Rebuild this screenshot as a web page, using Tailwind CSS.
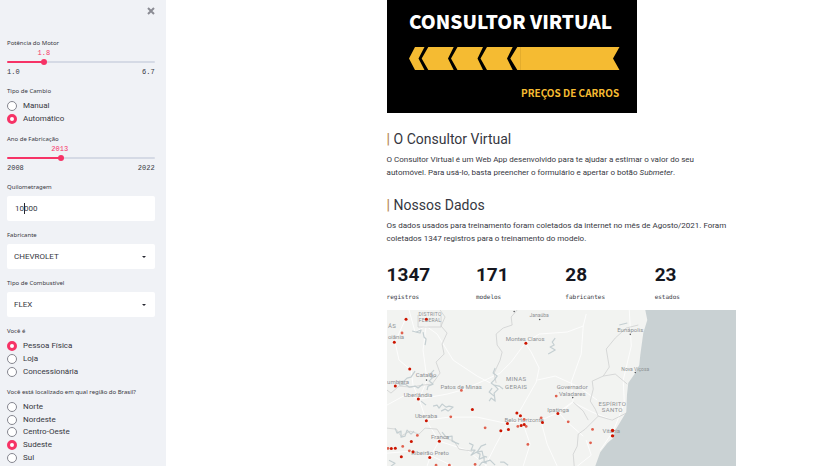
<!DOCTYPE html>
<html lang="pt-BR">
<head>
<meta charset="utf-8">
<meta name="viewport" content="width=device-width, initial-scale=1">
<title>Consultor Virtual</title>
<script src="https://cdn.jsdelivr.net/npm/@tailwindcss/browser@4"></script>
</head>
<body class="flex h-screen overflow-hidden bg-white font-['Roboto','Noto_Sans',sans-serif] text-[8px] text-[#363741]">

<aside class="w-1/5 shrink-0 overflow-hidden bg-[#f0f2f6] pl-[7px] pr-[11px]">
  <div class="flex h-[37px] justify-end pt-[7px]">
    <button type="button" aria-label="Fechar" class="size-2">
      <svg viewBox="0 0 8 8" class="size-2" fill="none" stroke="#8b8c94" stroke-width="2"><path d="M1 1l6 6M7 1L1 7"/></svg>
    </button>
  </div>

  <form class="flex flex-col gap-2">
    <div class="h-10">
      <label for="potencia" class="block h-3 font-['Noto_Sans',sans-serif] text-[6px] leading-3">Potência do Motor</label>
      <div class="relative h-2">
        <output for="potencia" class="absolute -translate-x-1/2 font-['Liberation_Mono',monospace] text-[7px] leading-[8px] text-[#f63366]" style="left:25%">1.8</output>
      </div>
      <input id="potencia" type="range" min="0" max="100" value="24" aria-valuetext="1.8" class="my-1 block h-[2px] w-full appearance-none rounded-full [&::-webkit-slider-thumb]:size-[6px] [&::-webkit-slider-thumb]:appearance-none [&::-webkit-slider-thumb]:rounded-full [&::-webkit-slider-thumb]:bg-[#f63366]" style="background:linear-gradient(to right,#f63366 24%,#d5dae5 24%)">
      <div class="flex h-[10px] justify-between font-['Liberation_Mono',monospace] text-[7px] leading-[10px]"><span>1.0</span><span>6.7</span></div>
    </div>

    <fieldset class="h-10">
      <legend class="mb-[3px] h-3 font-['Noto_Sans',sans-serif] text-[6px] leading-3">Tipo de Cambio</legend>
      <div class="grid h-[25px] auto-rows-fr">
        <label class="flex items-center gap-[6px]"><input type="radio" name="cambio" class="size-[10px] appearance-none rounded-full border border-[#85868f] bg-white checked:border-[3px] checked:border-[#f63366]">Manual</label>
        <label class="flex items-center gap-[6px]"><input type="radio" name="cambio" checked class="size-[10px] appearance-none rounded-full border border-[#85868f] bg-white checked:border-[3px] checked:border-[#f63366]">Automático</label>
      </div>
    </fieldset>

    <div class="h-10">
      <label for="ano" class="block h-3 font-['Noto_Sans',sans-serif] text-[6px] leading-3">Ano de Fabricação</label>
      <div class="relative h-2">
        <output for="ano" class="absolute -translate-x-1/2 font-['Liberation_Mono',monospace] text-[7px] leading-[8px] text-[#f63366]" style="left:35.7%">2013</output>
      </div>
      <input id="ano" type="range" min="2008" max="2022" value="2013" class="my-1 block h-[2px] w-full appearance-none rounded-full [&::-webkit-slider-thumb]:size-[6px] [&::-webkit-slider-thumb]:appearance-none [&::-webkit-slider-thumb]:rounded-full [&::-webkit-slider-thumb]:bg-[#f63366]" style="background:linear-gradient(to right,#f63366 35.7%,#d5dae5 35.7%)">
      <div class="flex h-[10px] justify-between font-['Liberation_Mono',monospace] text-[7px] leading-[10px]"><span>2008</span><span>2022</span></div>
    </div>

    <div class="relative h-10">
      <label for="km" class="mb-[3px] block h-3 font-['Noto_Sans',sans-serif] text-[6px] leading-3">Quilometragem</label>
      <input id="km" type="text" inputmode="numeric" value="10000" class="block h-[25px] w-full rounded-[2px] bg-white px-2">
      <span class="absolute left-[17px] top-[22px] h-[11px] w-px bg-[#262730]"></span>
    </div>

    <div class="h-10">
      <label for="fabricante" class="mb-[3px] block h-3 font-['Noto_Sans',sans-serif] text-[6px] leading-3">Fabricante</label>
      <div class="relative">
        <select id="fabricante" class="block h-[25px] w-full appearance-none rounded-[2px] bg-white px-[7px]"><option>CHEVROLET</option></select>
        <svg viewBox="0 0 4 2" class="pointer-events-none absolute right-[9px] top-3 h-[2px] w-1" fill="#262730"><path d="M0 0h4L2 2z"/></svg>
      </div>
    </div>

    <div class="h-10">
      <label for="combustivel" class="mb-[3px] block h-3 font-['Noto_Sans',sans-serif] text-[6px] leading-3">Tipo de Combustível</label>
      <div class="relative">
        <select id="combustivel" class="block h-[25px] w-full appearance-none rounded-[2px] bg-white px-[7px]"><option>FLEX</option></select>
        <svg viewBox="0 0 4 2" class="pointer-events-none absolute right-[9px] top-3 h-[2px] w-1" fill="#262730"><path d="M0 0h4L2 2z"/></svg>
      </div>
    </div>

    <fieldset>
      <legend class="mb-[3px] h-3 font-['Noto_Sans',sans-serif] text-[6px] leading-3">Você é</legend>
      <div class="grid h-[38px] auto-rows-fr">
        <label class="flex items-center gap-[6px]"><input type="radio" name="tipo" checked class="size-[10px] appearance-none rounded-full border border-[#85868f] bg-white checked:border-[3px] checked:border-[#f63366]">Pessoa Física</label>
        <label class="flex items-center gap-[6px]"><input type="radio" name="tipo" class="size-[10px] appearance-none rounded-full border border-[#85868f] bg-white checked:border-[3px] checked:border-[#f63366]">Loja</label>
        <label class="flex items-center gap-[6px]"><input type="radio" name="tipo" class="size-[10px] appearance-none rounded-full border border-[#85868f] bg-white checked:border-[3px] checked:border-[#f63366]">Concessionária</label>
      </div>
    </fieldset>

    <fieldset>
      <legend class="mb-[3px] h-3 whitespace-nowrap font-['Noto_Sans',sans-serif] text-[6px] leading-3">Você está localizado em qual região do Brasil?</legend>
      <div class="grid h-[63px] auto-rows-fr">
        <label class="flex items-center gap-[6px]"><input type="radio" name="regiao" class="size-[10px] appearance-none rounded-full border border-[#85868f] bg-white checked:border-[3px] checked:border-[#f63366]">Norte</label>
        <label class="flex items-center gap-[6px]"><input type="radio" name="regiao" class="size-[10px] appearance-none rounded-full border border-[#85868f] bg-white checked:border-[3px] checked:border-[#f63366]">Nordeste</label>
        <label class="flex items-center gap-[6px]"><input type="radio" name="regiao" class="size-[10px] appearance-none rounded-full border border-[#85868f] bg-white checked:border-[3px] checked:border-[#f63366]">Centro-Oeste</label>
        <label class="flex items-center gap-[6px]"><input type="radio" name="regiao" checked class="size-[10px] appearance-none rounded-full border border-[#85868f] bg-white checked:border-[3px] checked:border-[#f63366]">Sudeste</label>
        <label class="flex items-center gap-[6px]"><input type="radio" name="regiao" class="size-[10px] appearance-none rounded-full border border-[#85868f] bg-white checked:border-[3px] checked:border-[#f63366]">Sul</label>
      </div>
    </fieldset>
  </form>
</aside>

<main class="min-w-0 flex-1 overflow-hidden pl-[221px] pr-[92px]">
  <svg viewBox="0 0 250 113" class="block h-[113px] w-[250px] bg-black" role="img" aria-label="Consultor Virtual - Preços de Carros">
    <g fill="#f5bb32">
      <path d="M22 58.500 28 47H37.500L31.500 58.500 37.500 70H28Z"/>
      <path d="M34.700 58.500 41.300 47H66.700L61 58.500 66.700 70H41.300Z"/>
      <path d="M64 58.500 70.500 47H96L90.500 58.500 96 70H70.500Z"/>
      <path d="M93.500 58.500 100 47H125.700L120 58.500 125.700 70H100Z"/>
      <path d="M123.300 58.500 130.300 47H232.500L226 58.500 232.500 70H130.300Z"/>
    </g>
    <path d="M133.500 47v23" stroke="#e0a92c" stroke-width=".8"/>
    <text x="22" y="29" class="fill-white font-['Noto_Sans_CJK_JP',sans-serif] text-[19px] font-black">CONSULTOR VIRTUAL</text>
    <text x="134" y="97" class="fill-[#f5bb32] font-['Noto_Sans_CJK_JP',sans-serif] text-[10px] font-bold">PREÇOS DE CARROS</text>
  </svg>

  <section class="mt-4">
    <h2 class="text-[14px] leading-5"><span class="font-bold text-[#b98a5c]">|</span> O Consultor Virtual</h2>
    <p class="mt-1 max-w-[345px] leading-[13px]">O Consultor Virtual é um Web App desenvolvido para te ajudar a estimar o valor do seu automóvel. Para usá-lo, basta preencher o formulário e apertar o botão <em>Submeter</em>.</p>
  </section>

  <section class="mt-4">
    <h2 class="text-[14px] leading-5"><span class="font-bold text-[#b98a5c]">|</span> Nossos Dados</h2>
    <p class="mt-1 max-w-[345px] leading-[13px]">Os dados usados para treinamento foram coletados da internet no mês de Agosto/2021. Foram coletados 1347 registros para o treinamento do modelo.</p>
  </section>

  <dl class="mt-[18px] grid grid-cols-4 gap-2">
    <div class="flex flex-col-reverse"><dt class="mt-[2px] h-4 font-['DejaVu_Sans_Mono',monospace] text-[6px] leading-[16px]">registros</dt><dd class="text-[19px] font-bold leading-6 text-[#16171f]">1347</dd></div>
    <div class="flex flex-col-reverse"><dt class="mt-[2px] h-4 font-['DejaVu_Sans_Mono',monospace] text-[6px] leading-[16px]">modelos</dt><dd class="text-[19px] font-bold leading-6 text-[#16171f]">171</dd></div>
    <div class="flex flex-col-reverse"><dt class="mt-[2px] h-4 font-['DejaVu_Sans_Mono',monospace] text-[6px] leading-[16px]">fabricantes</dt><dd class="text-[19px] font-bold leading-6 text-[#16171f]">28</dd></div>
    <div class="flex flex-col-reverse"><dt class="mt-[2px] h-4 font-['DejaVu_Sans_Mono',monospace] text-[6px] leading-[16px]">estados</dt><dd class="text-[19px] font-bold leading-6 text-[#16171f]">23</dd></div>
  </dl>

  <svg viewBox="0 0 349 156" class="mt-[5px] block w-full bg-[#c9d1d3]" role="img" aria-label="Mapa dos registros">
    <path fill="#f2f3f1" d="M0 0H258L260 10 256 23 253 45 252 55 248 63 241 73 239.700 85 239 102 233 112 228 120 225.700 128 220 133 213 142 208 156H0Z"/>
    <!-- roads -->
    <g fill="none" stroke="#fff" stroke-width=".8">
      <path d="M22 0 28 22 39 16 50 24 66 50 90 66 113 78M18 10 8 32 12 50 24 60 26 75 32 89 39 110 52 131 43 147 40 156"/>
      <path d="M39 16 36 40 40 70 32 89 60 84 75 80 98 70 113 63 124 52 138 33 144 42 152 58 149 72 132 102M0 95 20 84 31 89M39 110 62 107 90 107 118 113 132 112 154 110 170 103 185 92 205 102 225 110"/>
      <path d="M138 33 152 24 180 22 196 16 199 4M196 16 194 44 184 72 186 92 172 103 180 112 196 126M136 114 143 134 136 156M120 114 108 136 98 156M52 131 80 140 100 156M0 143 24 141 45 146 66 156"/>
      <path d="M242 0 244 36 236 70 237 93 226 121 213 140M210 90 190 76 168 66 150 70M199 130 204 145 190 156M154 112 160 134 170 156"/>
    </g>
    <!-- state borders -->
    <g fill="none" stroke="#d0d1d1" stroke-width=".8">
      <path d="M31 5V17H54V6M53 0 58 7 54 16 60 23 55 34 57 44 49 52 53 63 45 74 36 75 24 77 12 76 4 83 0 80"/>
      <path d="M0 118 9 119 14 126 23 121 32 124 38 118 50 119 55 127 67 131 72 139 85 141"/>
      <path d="M130 0 124 7 125 15 116 18 109 24 110 35 115 42 113 50M113 50 107 63 109 73"/>
      <path d="M251 15 239 18 228 28 219 39 222 57 216 66 205 71 206 79 203 91 208 99 211 106 198 119 191 124 190 136 186 144 187 156M216 66 228 64 240 74M211 106 225 110 233 106 239 103M186 92 196 101 201 110"/>
    </g>
    <!-- rivers and reservoirs -->
    <g fill="none" stroke="#c5cfd2" stroke-width="1.200" stroke-linejoin="round">
      <path d="M25 21 29 22 34 20 33 23 28 22M36 22 37 27 39 29 38 35M28 61 24 67 20 68 17 71 11 72 13 75 18 74 22 77 28 76 31 78 36 74M47 60 42 65 45 68 42 71 46 74 41 76 40 80M45 68 49 66M34 91 39 95M46 96 50 95 52 98 55 94 59 97 62 96 66 97 61 101 58 99 54 101"/>
      <path d="M108 58 106 63 110 66 107 70 104 73 108 76 111 79 107 83 108 91 104 88 102 91M105 78 102 82 107 86M107 75 112 76 116 79M8 118 10 123 14 121 14 127 18 126 20 120 24 124 27 121M55 122 59 127 65 126 65 131 72 134M82 133 86 135 84 140 88 140 84 145 89 142 93 144 92 149 97 147 97 152 103 150 108 155M99 134 94 136 90 142 95 141 96 146 100 147M92 156 95 152 100 153"/>
      <path d="M168 28 165 32 167 35 163 37 168 40 161 44M2 150 8 153 4 156M113 152 117 152 121 155M232 15 240 13"/>
    </g>
    <g fill="#8e9194" class="font-['Roboto','Noto_Sans',sans-serif] text-[6px]" text-anchor="middle">
      <text x="43" y="6" class="text-[5px] tracking-wider">DISTRITO</text>
      <text x="43" y="12" class="text-[5px] tracking-wider">FEDERAL</text>
      <text x="5" y="18" class="tracking-wider">ÁS</text>
      <text x="9" y="29">oiânia</text>
      <text x="39" y="67">Catalão</text>
      <text x="11" y="74">umbiara</text>
      <text x="31" y="87">Uberlândia</text>
      <text x="74" y="79">Patos de Minas</text>
      <text x="39" y="108">Uberaba</text>
      <text x="53" y="129">Franca</text>
      <text x="43" y="145">Ribeirão Preto</text>
      <text x="152" y="7" class="text-[5px]">Janaúba</text>
      <text x="138" y="31">Montes Claros</text>
      <text x="129" y="71" class="tracking-wider">MINAS</text>
      <text x="129" y="79" class="tracking-wider">GERAIS</text>
      <text x="185" y="79">Governador</text>
      <text x="185" y="86">Valadares</text>
      <text x="171" y="102">Ipatinga</text>
      <text x="137" y="112">Belo Horizonte</text>
      <text x="225" y="96" class="tracking-wider">ESPÍRITO</text>
      <text x="225" y="102" class="tracking-wider">SANTO</text>
      <text x="224" y="123">Vitória</text>
      <text x="243" y="22">Eunápolis</text>
      <text x="248" y="61" class="text-[5px]">Nova Viçosa</text>
    </g>
    <g fill="#55575a"><circle cx="39.500" cy="70" r=".8"/><circle cx="152.500" cy="9.500" r=".8"/><circle cx="185.500" cy="87.500" r=".8"/><circle cx="243" cy="24.300" r=".8"/><circle cx="248" cy="62.500" r=".8"/><circle cx="127" cy="1.500" r=".8"/></g>
    <g fill="#e0604e">
      <circle cx="15" cy="23" r="1.400"/><circle cx="74.300" cy="80.300" r="1.400"/><circle cx="63.700" cy="106.700" r="1.400"/><circle cx="98" cy="117.700" r="1.400"/><circle cx="30.300" cy="125.300" r="1.400"/><circle cx="1" cy="138.300" r="1.400"/><circle cx="15.700" cy="136.300" r="1.400"/><circle cx="22.300" cy="140.700" r="1.400"/><circle cx="49" cy="155" r="1.400"/><circle cx="62.300" cy="155" r="1.400"/><circle cx="88" cy="154.300" r="1.400"/><circle cx="169" cy="86" r="1.400"/><circle cx="181" cy="111.700" r="1.400"/><circle cx="137" cy="109.300" r="1.400"/><circle cx="130.700" cy="116.300" r="1.400"/><circle cx="139" cy="116.300" r="1.400"/><circle cx="154" cy="107.700" r="1.400"/><circle cx="205.300" cy="119.300" r="1.400"/><circle cx="203.300" cy="132.700" r="1.400"/><circle cx="140.700" cy="134.300" r="1.400"/>
    </g>
    <g fill="#cc1500">
      <circle cx="19" cy="9.300" r="1.500"/><circle cx="39.300" cy="9.300" r="1.500"/><circle cx="7.300" cy="32.300" r="1.500"/><circle cx="22.700" cy="59" r="1.500"/><circle cx="8.300" cy="76" r="1.500"/><circle cx="31.300" cy="89" r="1.500"/><circle cx="85.300" cy="99.300" r="1.500"/><circle cx="39.300" cy="110.700" r="1.500"/><circle cx="113.700" cy="120.700" r="1.500"/><circle cx="120.300" cy="113.300" r="1.500"/><circle cx="121.300" cy="119.300" r="1.500"/><circle cx="24.300" cy="131.300" r="1.500"/><circle cx="52.300" cy="131" r="1.500"/><circle cx="4.300" cy="138.300" r="1.500"/><circle cx="8.300" cy="138" r="1.500"/><circle cx="26" cy="141.700" r="1.500"/><circle cx="14.300" cy="146.700" r="1.500"/><circle cx="42.700" cy="147.300" r="1.500"/><circle cx="138.700" cy="33.300" r="1.500"/><circle cx="170.700" cy="103.300" r="1.500"/><circle cx="129.700" cy="103" r="1.500"/><circle cx="133.300" cy="105.700" r="1.500"/><circle cx="137" cy="114.300" r="1.500"/><circle cx="134" cy="115.300" r="1.500"/><circle cx="155.300" cy="112.300" r="1.500"/><circle cx="225.300" cy="120.300" r="1.700"/><circle cx="225.300" cy="125.700" r="1.700"/>
    </g>
  </svg>
</main>
</body>
</html>
